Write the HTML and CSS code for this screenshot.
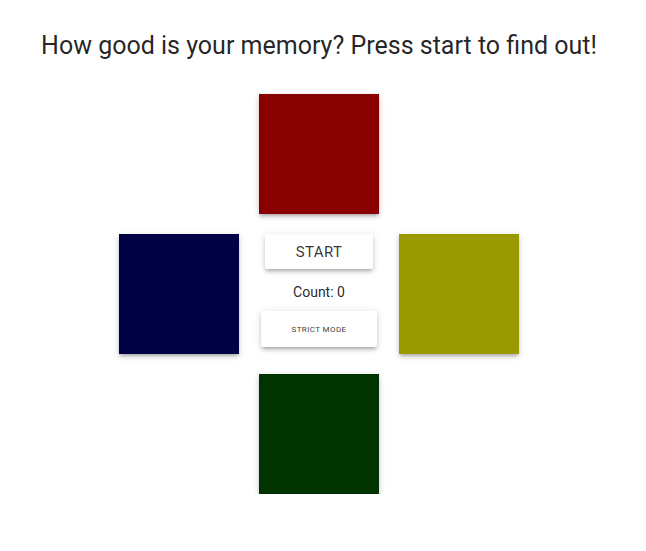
FILE: index.html
```html
<!DOCTYPE html>
<html>
<head>
<meta charset="utf-8">
<link rel="stylesheet" href="styles.css">
</head>
<body>
<main class="app">
  <h1 class="title">How good is your memory? Press start to find out!</h1>
  <div class="board">
    <div class="pad pad-red"></div>
    <div class="pad pad-blue"></div>
    <div class="controls">
      <button class="btn btn-start">START</button>
      <div class="count">Count: 0</div>
      <button class="btn btn-strict">STRICT MODE</button>
    </div>
    <div class="pad pad-yellow"></div>
    <div class="pad pad-green"></div>
  </div>
</main>
</body>
</html>
```
FILE: styles.css
```css
html, body {
  margin: 0;
  padding: 0;
  background: #ffffff;
}
.app {
  width: 638px;
  font-family: Roboto, "Liberation Sans", sans-serif;
  color: rgba(0, 0, 0, 0.87);
  display: flex;
  flex-direction: column;
  align-items: center;
}
.title {
  margin: 30px 0 0 0;
  font-size: 25px;
  font-weight: 400;
  line-height: 32px;
}
.board {
  margin-top: 32px;
  display: grid;
  grid-template-columns: 120px 120px 120px;
  grid-template-rows: 120px 120px 120px;
  gap: 20px;
}
.pad {
  width: 120px;
  height: 120px;
  box-shadow: 0 3px 3px -2px rgba(0,0,0,.2), 0 3px 4px 0 rgba(0,0,0,.14), 0 1px 8px 0 rgba(0,0,0,.12);
}
.pad-red { grid-column: 2; grid-row: 1; background: #880000; }
.pad-blue { grid-column: 1; grid-row: 2; background: #000044; }
.pad-yellow { grid-column: 3; grid-row: 2; background: #999900; }
.pad-green { grid-column: 2; grid-row: 3; background: #003300; }
.controls {
  grid-column: 2;
  grid-row: 2;
  display: flex;
  flex-direction: column;
  align-items: center;
}
.btn {
  border: none;
  background: #ffffff;
  border-radius: 2px;
  font-family: Roboto, "Liberation Sans", sans-serif;
  color: rgba(0, 0, 0, 0.8);
  padding: 0;
  box-shadow: 0 3px 3px -2px rgba(0,0,0,.2), 0 3px 4px 0 rgba(0,0,0,.14), 0 1px 8px 0 rgba(0,0,0,.12);
}
.btn-start {
  width: 108px;
  height: 35px;
  font-size: 15px;
  letter-spacing: 0.4px;
}
.count {
  margin-top: 15px;
  font-size: 14px;
  line-height: 16px;
}
.btn-strict {
  margin-top: 11px;
  width: 116px;
  height: 36px;
  font-size: 8px;
  letter-spacing: 0.4px;
}
```
